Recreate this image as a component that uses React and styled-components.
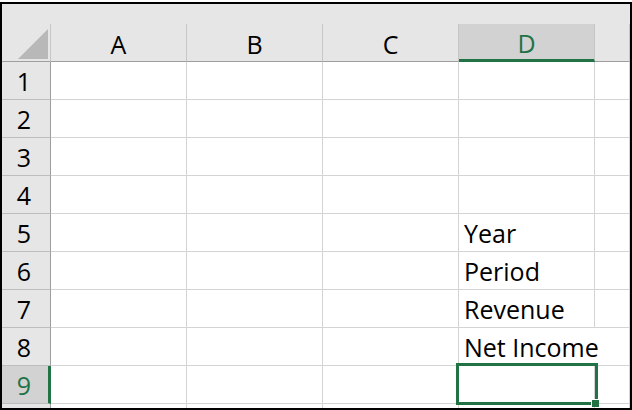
import React from "react";
import styled, { createGlobalStyle, css } from "styled-components";

const GREEN = "#217346";

const Global = createGlobalStyle`
  html, body { margin: 0; padding: 0; background: #fff; }
  body { font-family: "Open Sans", "Liberation Sans", sans-serif; }
`;

const Frame = styled.div`
  width: 632px;
  height: 410px;
  box-sizing: border-box;
  padding-top: 2px;
  background: #fff;
  overflow: hidden;
`;

const Sheet = styled.div`
  height: 408px;
  box-sizing: border-box;
  border: 2px solid #000;
  display: flex;
  flex-direction: column;
  background: #fff;
  overflow: hidden;
`;

const TopBand = styled.div`
  height: 20px;
  flex: none;
  background: #e6e6e6;
`;

const Grid = styled.div`
  flex: 1;
  display: grid;
  grid-template-columns: 49px repeat(4, 136px) 1fr;
  grid-auto-rows: 38px;
  overflow: hidden;
  font-size: 25px;
  line-height: 37px;
  color: #000;
`;

const Corner = styled.div`
  box-sizing: border-box;
  background: #e6e6e6;
  border-right: 1px solid #c6c6c6;
  border-bottom: 1px solid #9e9e9e;
  display: flex;
  align-items: flex-end;
  justify-content: flex-end;
  padding: 0 2px 2px 0;
`;

const ColHead = styled.div`
  box-sizing: border-box;
  background: ${(p) => (p.$active ? "#d2d2d2" : "#e6e6e6")};
  border-right: 1px solid #c6c6c6;
  border-bottom: ${(p) => (p.$active ? `3px solid ${GREEN}` : "1px solid #9e9e9e")};
  color: ${(p) => (p.$active ? GREEN : "#000")};
  text-align: center;
  line-height: ${(p) => (p.$active ? "35px" : "37px")};
  padding-top: 2px;
`;

const RowHead = styled.div`
  box-sizing: border-box;
  background: ${(p) => (p.$active ? "#d2d2d2" : "#e6e6e6")};
  border-right: ${(p) => (p.$active ? `3px solid ${GREEN}` : "1px solid #9e9e9e")};
  border-bottom: 1px solid #bdbdbd;
  color: ${(p) => (p.$active ? GREEN : "#000")};
  text-align: center;
  padding-top: 1px;
  padding-right: ${(p) => (p.$active ? "2px" : "4px")};
`;

const Cell = styled.div`
  position: relative;
  box-sizing: border-box;
  border-right: 1px solid ${(p) => (p.$overflow ? "transparent" : "#d4d4d4")};
  border-bottom: 1px solid #d4d4d4;
  padding-left: 5px;
  padding-top: 1px;
  white-space: nowrap;
  overflow: visible;
  ${(p) =>
    p.$overflow &&
    css`
      z-index: 1;
    `}
`;

const Selection = styled.div`
  position: absolute;
  left: -3px;
  top: -3px;
  width: 142px;
  height: 42px;
  box-sizing: border-box;
  border: 3px solid ${GREEN};
  z-index: 2;
`;

const Handle = styled.div`
  position: absolute;
  right: -4px;
  bottom: -5px;
  width: 7px;
  height: 7px;
  background: ${GREEN};
  border-left: 1px solid #fff;
  border-top: 1px solid #fff;
`;

const cols = ["A", "B", "C", "D", "E"];
const data = { 5: "Year", 6: "Period", 7: "Revenue", 8: "Net Income" };

export default function App() {
  const rows = [1, 2, 3, 4, 5, 6, 7, 8, 9, 10];
  return (
    <>
      <Global />
      <Frame>
        <Sheet>
          <TopBand />
          <Grid>
            <Corner>
              <svg width="30" height="30" viewBox="0 0 30 30">
                <polygon points="30,0 30,30 0,30" fill="#b8b8b8" />
              </svg>
            </Corner>
            {cols.map((c) => (
              <ColHead key={c} $active={c === "D"}>
                {c === "E" ? "" : c}
              </ColHead>
            ))}
            {rows.map((r) => (
              <React.Fragment key={r}>
                <RowHead $active={r === 9}>{r < 10 ? r : ""}</RowHead>
                {cols.map((c) => {
                  const text = c === "D" ? data[r] : undefined;
                  return (
                    <Cell key={c} $overflow={c === "D" && r === 8}>
                      {text}
                      {c === "D" && r === 9 && (
                        <Selection>
                          <Handle />
                        </Selection>
                      )}
                    </Cell>
                  );
                })}
              </React.Fragment>
            ))}
          </Grid>
        </Sheet>
      </Frame>
    </>
  );
}
